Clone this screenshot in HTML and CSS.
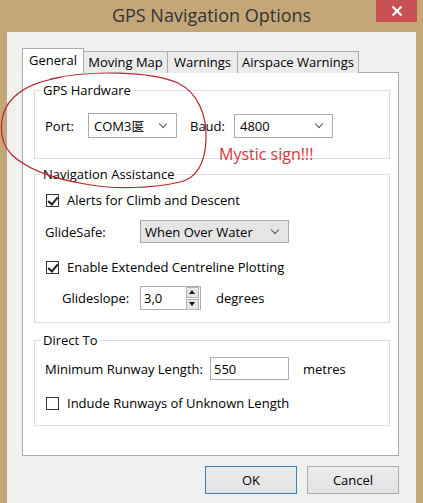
FILE: index.html
```html
<!DOCTYPE html>
<html lang="en">
<head>
  <meta charset="UTF-8" />
  <title>GPS Navigation Options</title>
  <link rel="stylesheet" href="styles.css">
</head>
<body>

  <div class="window">
    <div class="titlebar">
      <span class="title">GPS Navigation Options</span>
      <div class="close-btn">
        <svg width="12" height="12" viewBox="0 0 12 12">
          <path d="M1.5 1.5 L10.5 10.5 M10.5 1.5 L1.5 10.5" stroke="#fff" stroke-width="2.2" fill="none"/>
        </svg>
      </div>
    </div>

    <div class="client">
      <div class="tabs">
        <div class="tab active">General</div>
        <div class="tab tab-map">Moving Map</div>
        <div class="tab tab-warn">Warnings</div>
        <div class="tab tab-air">Airspace Warnings</div>
      </div>

      <div class="panel">
        <fieldset class="group gps">
          <legend>GPS Hardware</legend>
          <div class="row h25">
            <span class="lbl port-lbl">Port:</span>
            <div class="combo port-combo">COM3匽<span class="chev"></span></div>
            <span class="lbl baud-lbl">Baud:</span>
            <div class="combo baud-combo">4800<span class="chev"></span></div>
          </div>
        </fieldset>

        <fieldset class="group nav">
          <legend>Navigation Assistance</legend>
          <label class="check-row">
            <span class="box checked"></span>Alerts for Climb and Descent
          </label>
          <div class="row h23 glide-row">
            <span class="lbl glide-lbl">GlideSafe:</span>
            <div class="combo list-combo">When Over Water<span class="chev"></span></div>
          </div>
          <label class="check-row centre-row">
            <span class="box checked"></span>Enable Extended Centreline Plotting
          </label>
          <div class="row h24 slope-row">
            <span class="lbl slope-lbl">Glideslope:</span>
            <div class="spin">
              <span class="spin-val">3,0</span>
              <div class="spin-btns">
                <span class="spin-up"></span>
                <span class="spin-down"></span>
              </div>
            </div>
            <span class="unit">degrees</span>
          </div>
        </fieldset>

        <fieldset class="group direct">
          <legend>Direct To</legend>
          <div class="row h23">
            <span class="lbl runway-lbl">Minimum Runway Length:</span>
            <div class="textbox">550</div>
            <span class="unit metres">metres</span>
          </div>
          <label class="check-row unknown-row">
            <span class="box"></span>Indude Runways of Unknown Length
          </label>
        </fieldset>
      </div>

      <div class="buttons">
        <button class="btn default">OK</button>
        <button class="btn">Cancel</button>
      </div>
    </div>

    <!-- red marker scribble and note drawn over the dialog -->
    <svg class="scribble" width="423" height="503" viewBox="0 0 423 503">
      <path d="M50 79 C90 70 150 71 178 83 C198 93 207 115 206 140 C205 163 197 178 180 182
               C155 188 115 190 85 184 C55 179 28 170 12 155 C-3 140 -2 112 14 97 C26 86 40 81 62 77"
            stroke="#b8262f" stroke-width="1.2" fill="none"/>
    </svg>
    <div class="note">Mystic sign!!!</div>
  </div>

</body>
</html>
```

FILE: styles.css
```css
body {
  margin: 0;
  background: #c4a779;
  font-family: "Open Sans", "Noto Sans CJK SC", sans-serif;
  font-size: 13px;
  color: #000;
}

.window {
  position: relative;
  width: 423px;
  height: 503px;
  overflow: hidden;
}

.titlebar {
  height: 32px;
  display: flex;
  justify-content: center;
  align-items: center;
  position: relative;
}

.title {
  font-size: 18px;
  color: #333;
  margin-top: -2px;
}

.close-btn {
  position: absolute;
  top: 0;
  right: 6px;
  width: 41px;
  height: 22px;
  background: #c75050;
  display: flex;
  justify-content: center;
  align-items: center;
}

.client {
  margin: 0 7px;
  height: 471px;
  background: #f0f0f0;
  padding-top: 16px;
  box-sizing: border-box;
}

/* tab strip */
.tabs {
  display: flex;
  align-items: flex-end;
  margin-left: 15px;
  height: 25px;
  margin-bottom: -1px;
}

.tab {
  height: 22px;
  line-height: 21px;
  text-align: center;
  border: 1px solid #acacac;
  border-bottom: none;
  border-left: none;
  background: #ebebeb;
  box-sizing: border-box;
  white-space: nowrap;
}

.tab.active {
  height: 25px;
  line-height: 23px;
  background: #fff;
  border-left: 1px solid #acacac;
  position: relative;
  z-index: 1;
  width: 62px;
}

.tab-map { width: 84px; }
.tab-warn { width: 70px; }
.tab-air { width: 121px; }

.panel {
  margin-left: 15px;
  width: 377px;
  height: 384px;
  box-sizing: border-box;
  background: #fff;
  border: 1px solid #adadad;
  padding: 8px 8px 0 11px;
}

/* group boxes */
.group {
  margin: 0;
  border: 1px solid #dcdcdc;
  padding: 0 10px;
  min-width: 0;
}

.group legend {
  padding: 0 2px;
  margin-left: -4px;
  line-height: 19px;
}

.gps {
  padding-top: 13px;
  padding-bottom: 20px;
}

.nav {
  margin-top: 6px;
  padding-top: 6px;
  padding-bottom: 12px;
}

.direct {
  margin-top: 8px;
  padding-top: 7px;
  padding-bottom: 12px;
}

.row {
  display: flex;
  align-items: center;
}

.h25 { height: 25px; }
.h24 { height: 24px; }
.h23 { height: 23px; }

.port-lbl { width: 43px; }
.baud-lbl { margin-left: 13px; width: 44px; }
.glide-lbl { width: 95px; }
.slope-lbl { width: 78px; }
.runway-lbl { width: 165px; }

.glide-row { margin-top: 10px; }
.slope-row { margin-top: 9px; padding-left: 17px; }

/* drop-down boxes */
.combo {
  height: 100%;
  box-sizing: border-box;
  border: 1px solid #acacac;
  background: #fff;
  display: flex;
  align-items: center;
  padding-left: 5px;
  position: relative;
}

.port-combo { width: 89px; }
.baud-combo { width: 99px; height: 24px; }

.list-combo {
  width: 149px;
  background: #e5e5e5;
  padding-left: 4px;
}

.chev {
  position: absolute;
  right: 10px;
  top: 50%;
  width: 5px;
  height: 5px;
  margin-top: -5px;
  border-right: 1.6px solid #555;
  border-bottom: 1.6px solid #555;
  transform: rotate(45deg);
}

/* check boxes */
.check-row {
  display: flex;
  align-items: center;
  height: 20px;
}

.centre-row { margin-top: 14px; }
.unknown-row { margin-top: 13px; }

.box {
  width: 13px;
  height: 13px;
  box-sizing: border-box;
  border: 1px solid #333;
  background: #fff;
  margin: 0 8px 0 1px;
  position: relative;
}

.box.checked::after {
  content: "";
  position: absolute;
  left: 3px;
  top: 0;
  width: 4px;
  height: 8px;
  border-right: 2px solid #222;
  border-bottom: 2px solid #222;
  transform: rotate(40deg);
}

/* spin box */
.spin {
  width: 61px;
  height: 24px;
  box-sizing: border-box;
  border: 1px solid #abadb3;
  display: flex;
  align-items: center;
  justify-content: space-between;
  padding-left: 3px;
}

.spin-btns {
  display: flex;
  flex-direction: column;
  gap: 1px;
  padding-right: 1px;
}

.spin-up, .spin-down {
  width: 11px;
  height: 9px;
  background: #e6e6e6;
  border: 1px solid #b5b5b5;
  position: relative;
}

.spin-up::after, .spin-down::after {
  content: "";
  position: absolute;
  left: 2px;
  border-left: 3.5px solid transparent;
  border-right: 3.5px solid transparent;
}

.spin-up::after { top: 2px; border-bottom: 4px solid #111; }
.spin-down::after { top: 2px; border-top: 4px solid #111; }

.unit { margin-left: 15px; }
.metres { margin-left: 14px; }

.textbox {
  width: 79px;
  height: 23px;
  box-sizing: border-box;
  border: 1px solid #abadb3;
  padding-left: 3px;
  display: flex;
  align-items: center;
}

/* dialog buttons */
.buttons {
  display: flex;
  justify-content: flex-end;
  gap: 10px;
  margin-top: 10px;
  padding-right: 17px;
}

.btn {
  width: 92px;
  height: 28px;
  font-family: inherit;
  font-size: 13px;
  color: #000;
  background: linear-gradient(#ececec, #e2e2e2);
  border: 1px solid #acacac;
  padding: 0;
}

.btn.default {
  border-color: #3c7fb1;
}

.scribble {
  position: absolute;
  left: 0;
  top: 0;
  pointer-events: none;
}

.note {
  position: absolute;
  left: 219px;
  top: 144px;
  font-size: 16px;
  line-height: 20px;
  color: #d9343a;
}
```
